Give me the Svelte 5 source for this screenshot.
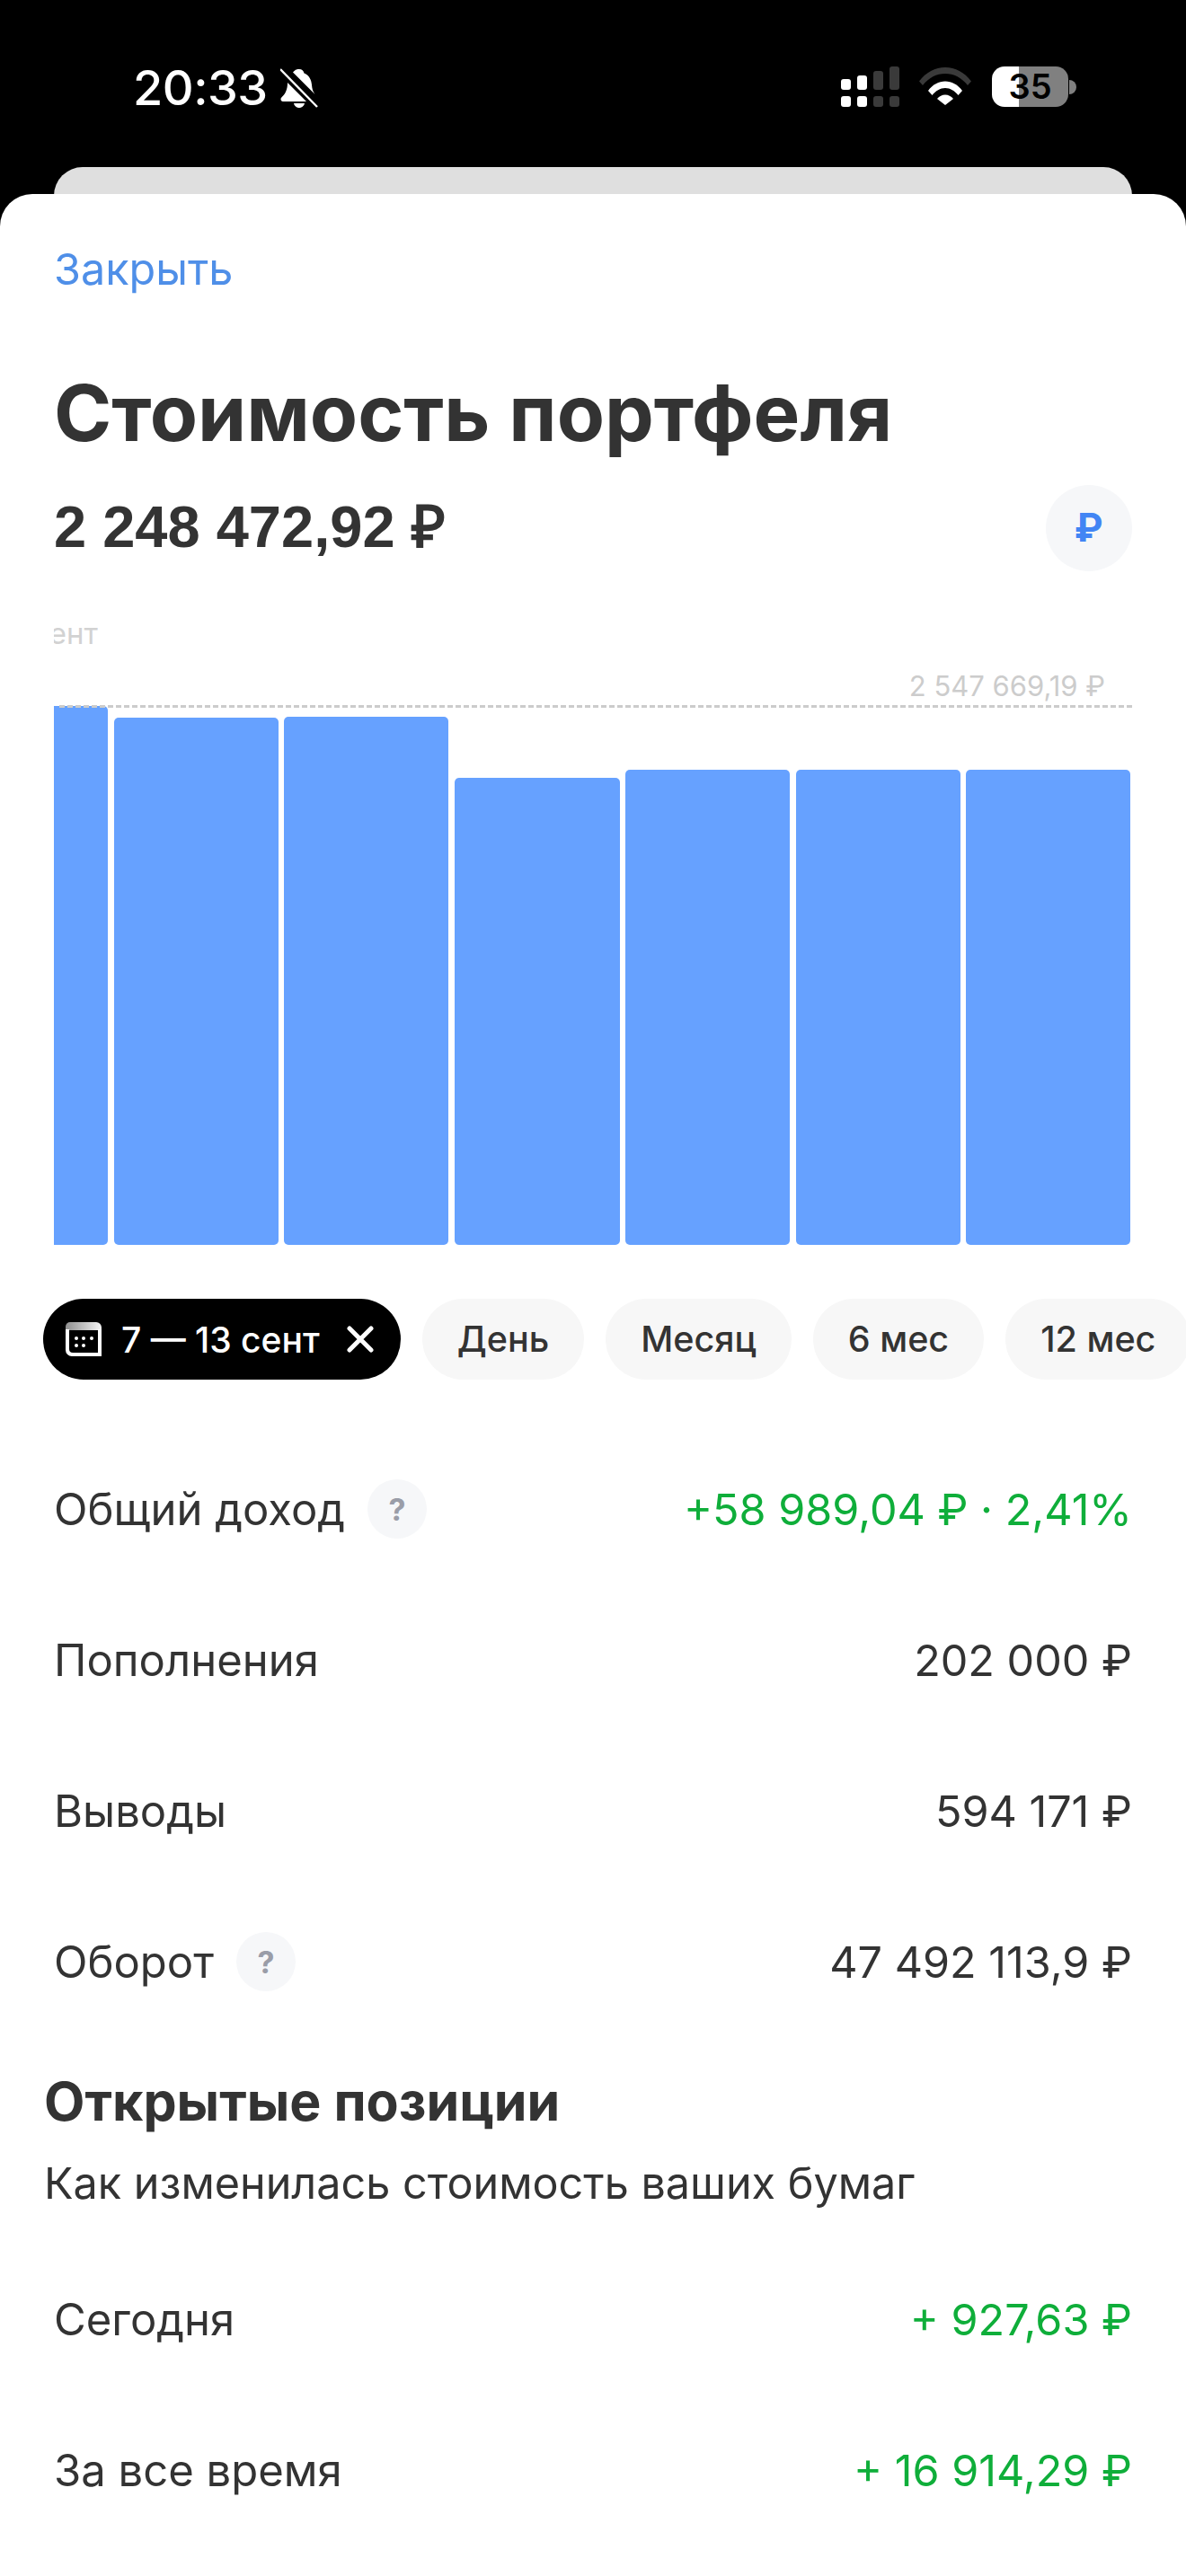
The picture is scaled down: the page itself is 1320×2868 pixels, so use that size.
<script>
  const bars = [
    { w: 60, top: 786, first: true },
    { w: 183, top: 799 },
    { w: 183, top: 798 },
    { w: 184, top: 866 },
    { w: 183, top: 857 },
    { w: 183, top: 857 },
    { w: 183, top: 857 }
  ];
  const chips = ['День', 'Месяц', '6 мес', '12 мес'];
  const rows = [
    { label: 'Общий доход', value: '+58 989,04 ₽ · 2,41%', help: true, up: true },
    { label: 'Пополнения', value: '202 000 ₽' },
    { label: 'Выводы', value: '594 171 ₽' },
    { label: 'Оборот', value: '47 492 113,9 ₽', help: true }
  ];
  const positions = [
    { label: 'Сегодня', value: '+ 927,63 ₽', up: true },
    { label: 'За все время', value: '+ 16 914,29 ₽', up: true }
  ];
</script>

<div class="screen">
  <header class="status">
    <span class="time">20:33</span>
    <svg class="bell" viewBox="0 0 42 44" aria-hidden="true">
      <path fill="#fff" d="M21 1c3 0 5 2 5.500 4.500 6 2.500 8 7.500 8.500 13 .3 4 1 7 3.500 10.500L14 4.500C15.500 3.500 16 1 21 1zM8 16l21 21H3c-1.500 0-2.500-1-2.500-2.500 0-1 .5-1.800 1.500-2.700C6 28 8 23 8 16zM15 39h12c-.5 2.800-3 5-6 5s-5.500-2.200-6-5z"/>
      <path stroke="#000" stroke-width="5" d="M1 2l40 41"/>
      <path stroke="#fff" stroke-width="2.400" d="M0 1l41 42"/>
    </svg>
    <div class="status-right">
      <svg class="signal" viewBox="0 0 65 45" aria-hidden="true">
        <rect x="0" y="14" width="11" height="12" rx="3" fill="#fff"/>
        <rect x="18" y="10" width="11" height="16" rx="3" fill="#fff"/>
        <rect x="36" y="5" width="11" height="21" rx="3" fill="#3a3a3a"/>
        <rect x="54" y="0" width="11" height="26" rx="3" fill="#3a3a3a"/>
        <rect x="0" y="33" width="11" height="12" rx="3" fill="#fff"/>
        <rect x="18" y="33" width="11" height="12" rx="3" fill="#fff"/>
        <rect x="36" y="33" width="11" height="12" rx="3" fill="#3a3a3a"/>
        <rect x="54" y="33" width="11" height="12" rx="3" fill="#3a3a3a"/>
      </svg>
      <svg class="wifi" viewBox="0 0 58 42" aria-hidden="true">
        <path fill="#3a3a3a" d="M0 15.500C7.500 5.500 18 0 29 0s21.500 5.500 29 15.500l-4 4.500C47.500 11.500 38.500 7 29 7S10.500 11.500 4 20z"/>
        <path fill="#fff" d="M10 26C15 19 22 15.500 29 15.500S43 19 48 26l-4.500 5C39.500 26 34.500 23 29 23s-10.500 3-14.500 8z"/>
        <path fill="#fff" d="M20 35c2.500-3 5.500-4.500 9-4.500s6.500 1.500 9 4.500l-9 7z"/>
      </svg>
      <div class="battery">
        <div class="battery-body"><span>35</span></div>
        <div class="battery-tip"></div>
      </div>
    </div>
  </header>

  <div class="back-card"></div>

  <main class="sheet">
    <div class="close">Закрыть</div>
    <h1>Стоимость портфеля</h1>
    <div class="amount-row">
      <div class="amount">2 248 472,92 ₽</div>
      <div class="currency">₽</div>
    </div>

    <section class="chart">
      <span class="date">сент</span>
      <span class="max">2 547 669,19 ₽</span>
      <div class="dash"></div>
      <div class="bars">
        {#each bars as b}
          <div class="bar" class:first={b.first} style="width:{b.w}px;height:{1386 - b.top}px"></div>
        {/each}
      </div>
    </section>

    <nav class="chips">
      <div class="chip active">
        <svg class="cal" viewBox="0 0 40 38" aria-hidden="true">
          <defs>
            <linearGradient id="calg" x1="0" y1="0" x2="1" y2="0">
              <stop offset="0" stop-color="#8f8f8f"/>
              <stop offset="1" stop-color="#f4f4f4"/>
            </linearGradient>
          </defs>
          <path fill="url(#calg)" d="M0 5a5 5 0 0 1 5-5h29a6 6 0 0 1 6 6v3H0z"/>
          <path fill="#fff" d="M0 8h4v22a4 4 0 0 0 4 4h28V8h4v30H7a7 7 0 0 1-7-7z"/>
          <g fill="#fff">
            <circle cx="12" cy="18" r="2"/><circle cx="20" cy="18" r="2"/><circle cx="29" cy="18" r="2"/>
            <circle cx="12" cy="26" r="2"/><circle cx="20" cy="26" r="2"/>
          </g>
        </svg>
        <span class="range">7 — 13 сент</span>
        <svg class="x" viewBox="0 0 30 30" aria-hidden="true">
          <path stroke="#fff" stroke-width="5" stroke-linecap="round" d="M3 3l24 24M27 3L3 27"/>
        </svg>
      </div>
      {#each chips as c}
        <div class="chip">{c}</div>
      {/each}
    </nav>

    <section class="list">
      {#each rows as r}
        <div class="row">
          <div class="label">{r.label}{#if r.help}<span class="help">?</span>{/if}</div>
          <div class="value" class:up={r.up}>{r.value}</div>
        </div>
      {/each}
    </section>

    <h2>Открытые позиции</h2>
    <p class="sub">Как изменилась стоимость ваших бумаг</p>

    <section class="list">
      {#each positions as r}
        <div class="row">
          <div class="label">{r.label}</div>
          <div class="value" class:up={r.up}>{r.value}</div>
        </div>
      {/each}
    </section>
  </main>
</div>

<style>
  :global(body) {
    margin: 0;
    background: #000;
  }
  .screen {
    width: 1320px;
    height: 2868px;
    overflow: hidden;
    background: #000;
    font-family: Inter, "Liberation Sans", sans-serif;
    color: #333;
    display: flex;
    flex-direction: column;
  }
  .status {
    height: 186px;
    flex: none;
    box-sizing: border-box;
    display: flex;
    align-items: flex-start;
    padding: 74px 122px 0 148px;
    color: #fff;
  }
  .time {
    font-size: 54px;
    line-height: 48px;
    font-weight: 500;
    letter-spacing: -0.5px;
  }
  .bell {
    width: 42px;
    height: 44px;
    margin: 2px 0 0 14px;
  }
  .status-right {
    margin-left: auto;
    display: flex;
    align-items: flex-start;
  }
  .signal {
    width: 65px;
    height: 45px;
  }
  .wifi {
    width: 58px;
    height: 42px;
    margin: 1px 0 0 22px;
  }
  .battery {
    display: flex;
    align-items: center;
    margin-left: 23px;
  }
  .battery-body {
    width: 85px;
    height: 45px;
    border-radius: 14px;
    background: linear-gradient(90deg, #fff 0 30px, #808080 30px);
    display: flex;
    align-items: center;
    justify-content: center;
  }
  .battery-body span {
    color: #000;
    font-size: 38px;
    font-weight: 600;
    line-height: 45px;
  }
  .battery-tip {
    width: 8px;
    height: 16px;
    margin-left: 1px;
    background: #808080;
    border-radius: 0 8px 8px 0;
  }
  .back-card {
    flex: none;
    height: 60px;
    margin: 0 60px -30px;
    background: #dfdfdf;
    border-radius: 32px 32px 0 0;
  }
  .sheet {
    position: relative;
    flex: 1;
    background: #fff;
    border-radius: 36px 36px 0 0;
    display: flex;
    flex-direction: column;
  }
  .close {
    margin: 56px 60px 0;
    font-size: 48.500px;
    line-height: 56px;
    color: #4f8fe8;
  }
  h1 {
    margin: 82px 60px 0;
    font-size: 87px;
    line-height: 100px;
    font-weight: 700;
    white-space: nowrap;
  }
  .amount-row {
    margin: 30px 60px 0;
    height: 96px;
    display: flex;
    align-items: center;
    justify-content: space-between;
  }
  .amount {
    font-family: "Liberation Sans", sans-serif;
    font-size: 65px;
    line-height: 72px;
    padding-bottom: 3px;
    font-weight: 700;
    white-space: nowrap;
  }
  .currency {
    width: 96px;
    height: 96px;
    border-radius: 50%;
    background: #f6f7f9;
    color: #4285f4;
    font-family: Roboto, sans-serif;
    font-size: 44px;
    font-weight: 700;
    display: flex;
    align-items: center;
    justify-content: center;
  }
  .chart {
    position: relative;
    margin: 54px 60px 0;
    height: 696px;
    display: flex;
    align-items: flex-end;
    overflow: hidden;
  }
  .date {
    position: absolute;
    left: -24px;
    top: -4px;
    font-size: 33px;
    line-height: 38px;
    color: #d2d2d2;
  }
  .max {
    position: absolute;
    right: 30px;
    top: 56px;
    font-size: 31px;
    line-height: 36px;
    color: #ccc;
    white-space: nowrap;
  }
  .dash {
    position: absolute;
    z-index: 1;
    left: 6px;
    right: 0;
    top: 95px;
    border-top: 3px dashed #ccc;
  }
  .bars {
    display: flex;
    align-items: flex-end;
    gap: 6.5px;
    height: 600px;
  }
  .bar {
    flex: none;
    background: #66a1ff;
    border-radius: 5px;
  }
  .bar.first {
    border-radius: 0 5px 5px 0;
  }
  .chips {
    margin-top: 60px;
    padding-left: 48px;
    display: flex;
    gap: 24px;
    overflow: hidden;
  }
  .chip {
    flex: none;
    height: 90px;
    padding: 0 39px;
    border-radius: 45px;
    background: #f7f7f7;
    display: flex;
    align-items: center;
    font-size: 39.500px;
    font-weight: 500;
    white-space: nowrap;
  }
  .chip.active {
    background: #000;
    color: #fff;
    font-size: 39px;
    padding: 0 30px 0 25px;
  }
  .cal {
    width: 40px;
    height: 38px;
    flex: none;
  }
  .range {
    margin: 0 30px 0 22px;
  }
  .x {
    width: 30px;
    height: 30px;
    flex: none;
  }
  .list {
    display: flex;
    flex-direction: column;
    margin: 60px 60px 0;
  }
  .row {
    height: 168px;
    display: flex;
    align-items: center;
    justify-content: space-between;
    font-size: 49px;
    white-space: nowrap;
  }
  .value {
    font-size: 48.500px;
  }
  .label {
    display: flex;
    align-items: center;
  }
  .help {
    width: 66px;
    height: 66px;
    margin-left: 25px;
    border-radius: 50%;
    background: #f6f7f9;
    color: #9a9da8;
    font-size: 34px;
    font-weight: 700;
    display: flex;
    align-items: center;
    justify-content: center;
  }
  .value.up {
    color: #0fae3a;
  }
  h2 {
    margin: 36px 49px 0;
    font-size: 59px;
    line-height: 72px;
    font-weight: 700;
    white-space: nowrap;
  }
  .sub {
    margin: 27px 49px 0;
    font-size: 48.500px;
    line-height: 56px;
    white-space: nowrap;
  }
  .sub + .list {
    margin-top: 39px;
  }
</style>
